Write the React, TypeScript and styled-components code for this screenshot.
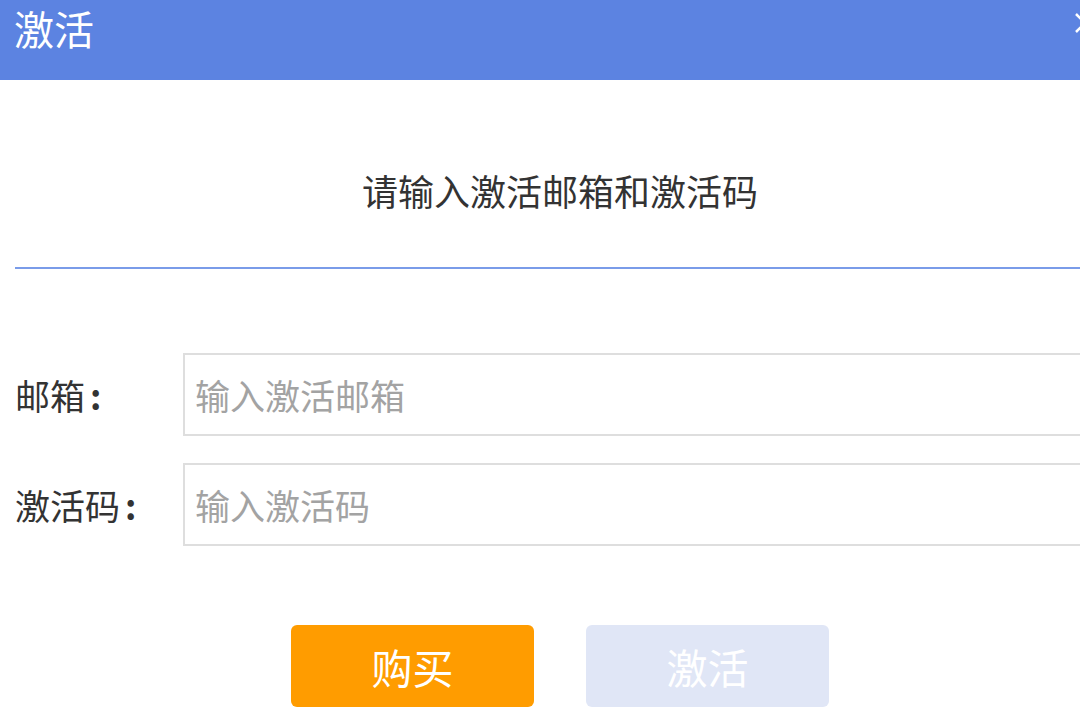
import React from 'react';
import styled, { createGlobalStyle } from 'styled-components';

const GlobalStyle = createGlobalStyle`
  html, body {
    margin: 0;
    padding: 0;
    background: #ffffff;
    overflow: hidden;
  }
  body {
    font-family: "Noto Sans CJK SC", "Microsoft YaHei", sans-serif;
  }
`;

const Dialog = styled.div`
  width: 1120px;
  height: 720px;
  background: #ffffff;
  display: flex;
  flex-direction: column;
`;

const TitleBar = styled.div`
  height: 80px;
  flex-shrink: 0;
  background: #5c83e1;
  display: flex;
  align-items: flex-start;
  justify-content: space-between;
  padding: 0 22px 0 14px;
  box-sizing: border-box;
`;

const Title = styled.div`
  color: #ffffff;
  font-size: 40px;
  line-height: 56px;
`;

const CloseButton = styled.button`
  border: none;
  background: transparent;
  padding: 0;
  margin-top: 10px;
  width: 26px;
  height: 26px;
  cursor: pointer;
  display: flex;
  align-items: center;
  justify-content: center;
`;

const Body = styled.div`
  padding: 0 15px;
  display: flex;
  flex-direction: column;
`;

const Subtitle = styled.div`
  margin-top: 85px;
  text-align: center;
  color: #333333;
  font-size: 36px;
  line-height: 50px;
`;

const Divider = styled.div`
  margin-top: 52px;
  height: 2px;
  background: #7a9ce9;
`;

const Form = styled.div`
  margin-top: 84px;
  display: flex;
  flex-direction: column;
  gap: 27px;
`;

const Row = styled.div`
  display: flex;
  align-items: center;
`;

const Label = styled.label`
  width: 168px;
  flex-shrink: 0;
  color: #333333;
  font-size: 35px;
  line-height: 40px;
`;

const Colon = styled.span`
  margin-left: 5px;
  font-weight: bold;
`;

const Input = styled.input`
  flex: 1;
  height: 83px;
  box-sizing: border-box;
  border: 2px solid #dedede;
  padding: 0 10px;
  font-family: inherit;
  font-size: 35px;
  color: #333333;
  outline: none;

  &::placeholder {
    color: #a3a3a3;
  }
`;

const Actions = styled.div`
  margin-top: 79px;
  display: flex;
  justify-content: center;
  gap: 52px;
`;

const ActionButton = styled.button<{ $variant: 'buy' | 'activate' }>`
  width: 243px;
  height: 82px;
  border: none;
  border-radius: 6px;
  font-family: inherit;
  font-size: 41px;
  color: #ffffff;
  cursor: pointer;
  background: ${({ $variant }) => ($variant === 'buy' ? '#ff9c00' : '#e0e6f6')};
`;

export default function App() {
  return (
    <>
      <GlobalStyle />
      <Dialog>
        <TitleBar>
          <Title>激活</Title>
          <CloseButton aria-label="关闭">
            <svg width="22" height="22" viewBox="0 0 22 22">
              <path d="M2 2 L20 20 M20 2 L2 20" stroke="#ffffff" strokeWidth="2.5" />
            </svg>
          </CloseButton>
        </TitleBar>
        <Body>
          <Subtitle>请输入激活邮箱和激活码</Subtitle>
          <Divider />
          <Form>
            <Row>
              <Label>
                邮箱<Colon>:</Colon>
              </Label>
              <Input placeholder="输入激活邮箱" />
            </Row>
            <Row>
              <Label>
                激活码<Colon>:</Colon>
              </Label>
              <Input placeholder="输入激活码" />
            </Row>
          </Form>
          <Actions>
            <ActionButton $variant="buy">购买</ActionButton>
            <ActionButton $variant="activate" disabled>
              激活
            </ActionButton>
          </Actions>
        </Body>
      </Dialog>
    </>
  );
}
